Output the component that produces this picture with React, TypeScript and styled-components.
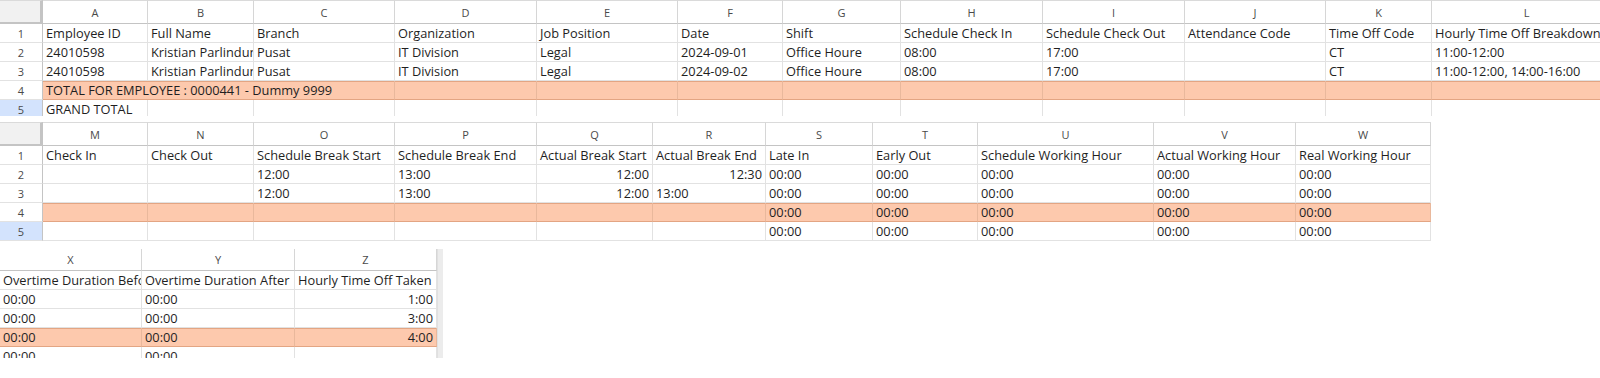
import React from "react";
import styled, { createGlobalStyle } from "styled-components";

type Align = "left" | "right";
type CellData = string | { text: string; align?: Align; span?: number };
interface RowData {
  cells: CellData[];
  tone?: "total";
}
interface Column {
  key: string;
  width: number;
}

const GlobalStyle = createGlobalStyle`
  html, body {
    margin: 0;
    background: #ffffff;
    font-family: "Open Sans", "Noto Sans", sans-serif;
  }
`;

const Page = styled.div`
  display: flex;
  flex-direction: column;
  align-items: flex-start;
  width: 1600px;
  height: 378px;
  overflow: hidden;
`;

const Frame = styled.div<{ $height: number; $top: number; $width?: number }>`
  display: flex;
  align-items: flex-start;
  margin-top: ${(p) => p.$top}px;
  height: ${(p) => p.$height}px;
  width: ${(p) => (p.$width ? `${p.$width}px` : "auto")};
  overflow: hidden;
  flex-shrink: 0;
`;

const Grid = styled.div`
  display: flex;
  flex-direction: column;
  flex-shrink: 0;
`;

const Line = styled.div<{ $template: string; $height: number }>`
  display: grid;
  grid-template-columns: ${(p) => p.$template};
  height: ${(p) => p.$height}px;
  flex-shrink: 0;
`;

const Corner = styled.div`
  box-sizing: border-box;
  background: #f1f1f1;
  border-top: 1px solid #dadada;
  border-right: 3px solid #c4c4c4;
  border-bottom: 2px solid #c4c4c4;
`;

const ColHead = styled.div<{ $top: boolean }>`
  box-sizing: border-box;
  display: flex;
  align-items: center;
  justify-content: center;
  background: #ffffff;
  border-top: ${(p) => (p.$top ? "1px solid #dadada" : "none")};
  border-right: 1px solid #d6d6d6;
  border-bottom: 1px solid #c4c4c4;
  font-size: 11px;
  color: #4a4a4a;
`;

const RowHead = styled.div<{ $selected: boolean }>`
  box-sizing: border-box;
  display: flex;
  align-items: center;
  justify-content: center;
  background: ${(p) => (p.$selected ? "#d3e3fd" : "#ffffff")};
  border-right: 1px solid #c4c4c4;
  border-bottom: 1px solid #e2e2e2;
  font-size: 11px;
  color: #4a4a4a;
`;

const Cell = styled.div<{ $align: Align; $tone?: "total"; $span: number }>`
  box-sizing: border-box;
  grid-column: span ${(p) => p.$span};
  display: flex;
  align-items: flex-end;
  justify-content: ${(p) => (p.$align === "right" ? "flex-end" : "flex-start")};
  padding: 0 3px 0;
  overflow: hidden;
  white-space: nowrap;
  background: ${(p) => (p.$tone ? "#fdc9ad" : "#ffffff")};
  border-right: 1px solid ${(p) => (p.$tone ? "#e9b89c" : "#e2e2e2")};
  border-bottom: 1px solid ${(p) => (p.$tone ? "#e3a583" : "#e2e2e2")};
  box-shadow: ${(p) => (p.$tone ? "inset 0 1px 0 #e3a583" : "none")};
  font-size: 12.8px;
  line-height: 18px;
  color: #1f1f1f;
`;

const Scrollbar = styled.div`
  width: 5px;
  height: 100%;
  background: #ececec;
  border-left: 1px solid #e0e0e0;
`;

interface SheetProps {
  cols: Column[];
  rows: RowData[];
  rowNumbers?: boolean;
  selected?: number;
  headHeight: number;
  headTop?: boolean;
}

function Sheet({ cols, rows, rowNumbers, selected, headHeight, headTop = true }: SheetProps) {
  const template =
    (rowNumbers ? "43px " : "") + cols.map((c) => `${c.width}px`).join(" ");

  return (
    <Grid>
      <Line $template={template} $height={headHeight}>
        {rowNumbers && <Corner />}
        {cols.map((c) => (
          <ColHead key={c.key} $top={headTop}>
            {c.key}
          </ColHead>
        ))}
      </Line>
      {rows.map((row, i) => (
        <Line key={i} $template={template} $height={19}>
          {rowNumbers && <RowHead $selected={selected === i + 1}>{i + 1}</RowHead>}
          {row.cells.map((cell, j) => {
            const c = typeof cell === "string" ? { text: cell } : cell;
            return (
              <Cell
                key={j}
                $align={c.align ?? "left"}
                $tone={row.tone}
                $span={c.span ?? 1}
              >
                {c.text}
              </Cell>
            );
          })}
        </Line>
      ))}
    </Grid>
  );
}

const r = (text: string): CellData => ({ text, align: "right" });
const blank = (n: number): string[] => Array.from({ length: n }, () => "");
const zeros = (n: number): string[] => Array.from({ length: n }, () => "00:00");

const firstCols: Column[] = [
  { key: "A", width: 105 },
  { key: "B", width: 106 },
  { key: "C", width: 141 },
  { key: "D", width: 142 },
  { key: "E", width: 141 },
  { key: "F", width: 105 },
  { key: "G", width: 118 },
  { key: "H", width: 142 },
  { key: "I", width: 142 },
  { key: "J", width: 141 },
  { key: "K", width: 106 },
  { key: "L", width: 190 },
];

const firstRows: RowData[] = [
  {
    cells: [
      "Employee ID",
      "Full Name",
      "Branch",
      "Organization",
      "Job Position",
      "Date",
      "Shift",
      "Schedule Check In",
      "Schedule Check Out",
      "Attendance Code",
      "Time Off Code",
      "Hourly Time Off Breakdown",
    ],
  },
  {
    cells: [
      "24010598",
      "Kristian Parlindungan",
      "Pusat",
      "IT Division",
      "Legal",
      "2024-09-01",
      "Office Houre",
      "08:00",
      "17:00",
      "",
      "CT",
      "11:00-12:00",
    ],
  },
  {
    cells: [
      "24010598",
      "Kristian Parlindungan",
      "Pusat",
      "IT Division",
      "Legal",
      "2024-09-02",
      "Office Houre",
      "08:00",
      "17:00",
      "",
      "CT",
      "11:00-12:00, 14:00-16:00",
    ],
  },
  {
    tone: "total",
    cells: [{ text: "TOTAL FOR EMPLOYEE : 0000441 - Dummy 9999", span: 3 }, ...blank(9)],
  },
  { cells: ["GRAND TOTAL", ...blank(11)] },
];

const secondCols: Column[] = [
  { key: "M", width: 105 },
  { key: "N", width: 106 },
  { key: "O", width: 141 },
  { key: "P", width: 142 },
  { key: "Q", width: 116 },
  { key: "R", width: 113 },
  { key: "S", width: 107 },
  { key: "T", width: 105 },
  { key: "U", width: 176 },
  { key: "V", width: 142 },
  { key: "W", width: 135 },
];

const secondRows: RowData[] = [
  {
    cells: [
      "Check In",
      "Check Out",
      "Schedule Break Start",
      "Schedule Break End",
      "Actual Break Start",
      "Actual Break End",
      "Late In",
      "Early Out",
      "Schedule Working Hour",
      "Actual Working Hour",
      "Real Working Hour",
    ],
  },
  { cells: ["", "", "12:00", "13:00", r("12:00"), r("12:30"), ...zeros(5)] },
  { cells: ["", "", "12:00", "13:00", r("12:00"), "13:00", ...zeros(5)] },
  { tone: "total", cells: [...blank(6), ...zeros(5)] },
  { cells: [...blank(6), ...zeros(5)] },
];

const thirdCols: Column[] = [
  { key: "X", width: 142 },
  { key: "Y", width: 153 },
  { key: "Z", width: 142 },
];

const thirdRows: RowData[] = [
  { cells: ["Overtime Duration Before", "Overtime Duration After", "Hourly Time Off Taken"] },
  { cells: ["00:00", "00:00", r("1:00")] },
  { cells: ["00:00", "00:00", r("3:00")] },
  { tone: "total", cells: ["00:00", "00:00", r("4:00")] },
  { cells: ["00:00", "00:00", ""] },
];

export default function App() {
  return (
    <Page>
      <GlobalStyle />
      <Frame $top={0} $height={116} $width={1600}>
        <Sheet cols={firstCols} rows={firstRows} rowNumbers selected={5} headHeight={24} />
      </Frame>
      <Frame $top={6} $height={119}>
        <Sheet cols={secondCols} rows={secondRows} rowNumbers selected={5} headHeight={24} />
      </Frame>
      <Frame $top={8} $height={109}>
        <Sheet cols={thirdCols} rows={thirdRows} headHeight={22} headTop={false} />
        <Scrollbar />
      </Frame>
    </Page>
  );
}
